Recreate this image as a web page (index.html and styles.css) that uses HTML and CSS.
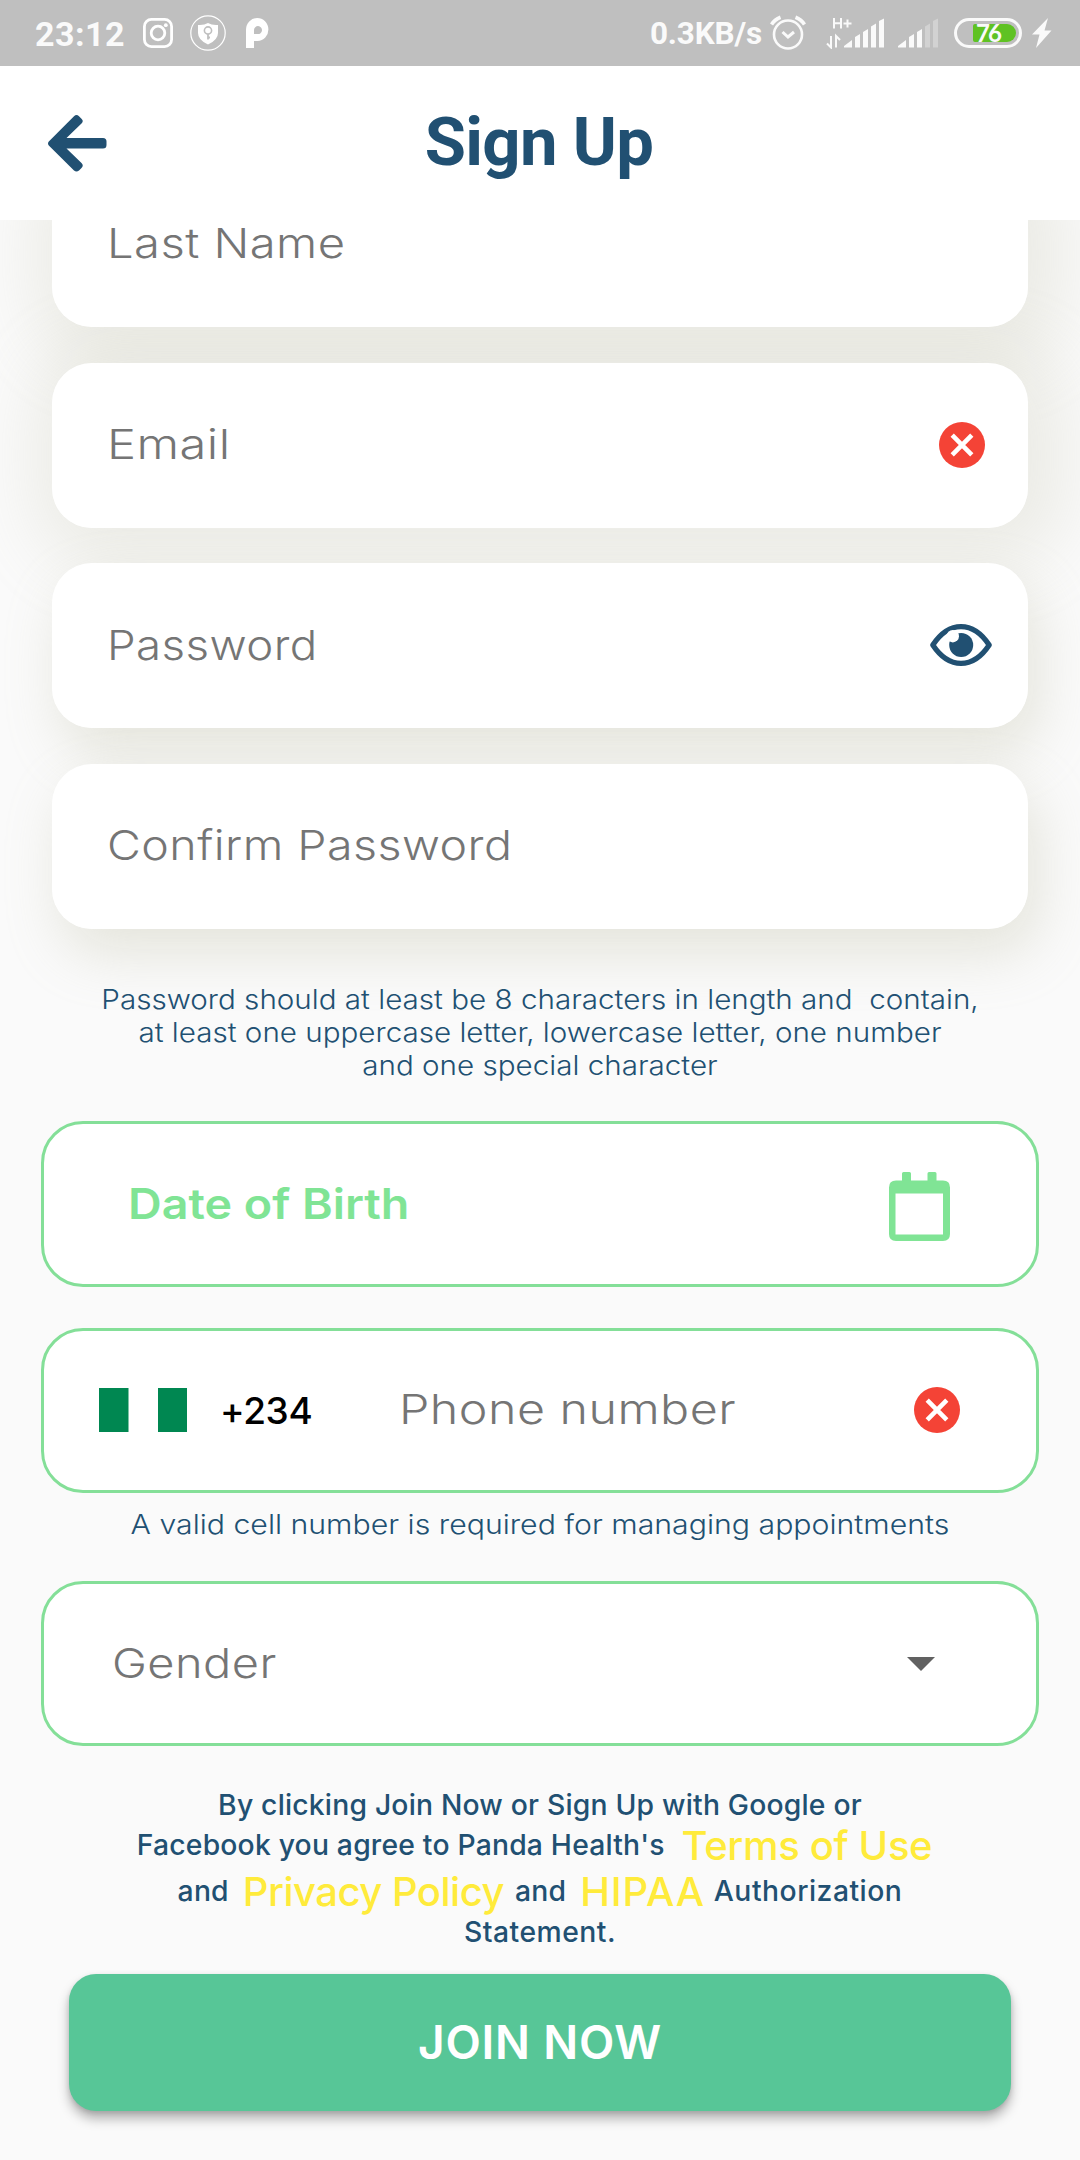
FILE: index.html
```html
<!DOCTYPE html>
<html lang="en">
<head>
<meta charset="utf-8">
<title>Sign Up</title>
<link rel="stylesheet" href="styles.css">
</head>
<body>
<div class="status">
  <span class="status__time">23:12</span>
  <svg class="status__insta" width="30" height="30" viewBox="0 0 30 30" fill="none" stroke="#fff" stroke-width="2.8"><rect x="1.4" y="1.4" width="27.2" height="27.2" rx="7"/><circle cx="15" cy="15" r="6.8"/><circle cx="22.8" cy="7.2" r="1.9" fill="#fff" stroke="none"/></svg>
  <svg class="status__shield" width="36" height="36" viewBox="0 0 36 36"><circle cx="18" cy="18" r="17.2" fill="none" stroke="#fff" stroke-width="1.2"/><path d="M8 10Q14 10.500 18 8Q22 10.500 28 10V18Q28 25 18 29.500Q8 25 8 18Z" fill="#fff"/><circle cx="18" cy="15.500" r="3.600" fill="none" stroke="#bfbfbf" stroke-width="1.600"/><path d="M18 19V24.500M18 22.500H20" stroke="#bfbfbf" stroke-width="1.800"/></svg>
  <svg class="status__p" width="23" height="30" viewBox="0 0 23 30"><path fill="#fff" fill-rule="evenodd" d="M0 30V11.500A11.200 11.500 0 1 1 11.500 23H8V30ZM8 16H11.500A4 4 0 1 0 8 12Z"/></svg>
  <span class="status__rate">0.3KB/s</span>
  <svg class="status__alarm" width="36" height="36" viewBox="0 0 36 36" fill="none" stroke="#fafafa" stroke-width="2.600"><circle cx="18" cy="19.500" r="14"/><path d="M12.500 17L18 22L24 17" stroke-width="3"/><path d="M1.500 9.500Q4.500 4.500 10.500 2.200M25.500 2.200Q31.500 4.500 34.500 9.500" stroke-width="3.600"/></svg>
  <svg class="status__signal" width="58" height="32" viewBox="0 0 58 32"><g fill="none" stroke="#fafafa" stroke-width="2"><path d="M8 1V11.500M15 1V11.500M8 6.300H15M17.500 6.500H25.500M21.500 2.500V10.500"/><path d="M5 19V30.500L1 26.500M10 30.500V19L14 23"/></g><path fill="#fafafa" d="M18 30.500V29L26 23V30.500ZM29 30.500V20L34 17V30.500ZM37 30.500V15L42 12V30.500ZM45 30.500V9.500L50 6.500V30.500ZM53 30.500V4L58 1.500V30.500Z"/></svg>
  <svg class="status__signal2" width="40" height="32" viewBox="0 0 40 32"><path fill="#fafafa" d="M0 30.500V29L8 23V30.500ZM11 30.500V20L16 17V30.500ZM19 30.500V15L24 12V30.500Z"/><path fill="#d2d2d2" d="M27 30.500V9.500L32 6.500V30.500ZM35 30.500V4L40 1.500V30.500Z"/></svg>
  <span class="battery"><span class="battery__level">76</span></span>
  <svg class="status__bolt" width="20" height="30" viewBox="0 0 20 30"><path fill="#fafafa" d="M16 0L0 16.500H7.500L4 30L19.500 12.500H12.500Z"/></svg>
</div>

<header class="header">
  <svg class="header__back" width="59" height="57" viewBox="0 0 59 57"><path fill="#215072" d="M0.800 26.500L26 1.200Q28.500 -1 31 1.200L33.500 3.700Q36 6 33.500 8.500L18.500 23H55Q58.500 23 58.500 26.500V30Q58.500 33.500 55 33.500H18.500L33.500 48Q36 50.500 33.500 53L31 55.500Q28.500 57.700 26 55.500L0.800 30.500Q-0.800 28.500 0.800 26.500Z"/></svg>
  <h1 class="header__title">Sign Up</h1>
</header>

<main class="form">
  <div class="card card--first"><span class="label label--last">Last Name</span></div>
  <div class="card"><span class="label label--email">Email</span>
    <svg class="card__error" width="46" height="46" viewBox="0 0 46 46"><circle cx="23" cy="23" r="23" fill="#f44336"/><path d="M13.200 13.200L32.800 32.800M32.800 13.200L13.200 32.800" stroke="#fff" stroke-width="4.600"/></svg>
  </div>
  <div class="card card--soft"><span class="label label--pass">Password</span>
    <svg class="card__eye" width="62" height="42" viewBox="0 0 62 42"><path d="M2.800 21Q15 2.600 31 2.600T59.200 21Q47 39.400 31 39.400T2.800 21Z" fill="none" stroke="#215072" stroke-width="5.200" stroke-linejoin="round"/><circle cx="31.200" cy="21" r="12" fill="#215072"/><circle cx="22.800" cy="12.200" r="6.200" fill="#fff"/></svg>
  </div>
  <div class="card card--soft"><span class="label label--confirm">Confirm Password</span></div>

  <p class="hint">
    <span class="hint__line">Password should at least be 8 characters in length and&nbsp; contain,</span>
    <span class="hint__line">at least one uppercase letter, lowercase letter, one number</span>
    <span class="hint__line">and one special character</span>
  </p>

  <div class="box box--date"><span class="date">Date of Birth</span>
    <svg class="box__calendar" width="61" height="70" viewBox="0 0 61 70"><path fill="#80e495" fill-rule="evenodd" d="M13 1.500Q13 0 14.500 0H20.500Q22 0 22 1.500V8.500H38.500V1.500Q38.500 0 40 0H46Q47.500 0 47.500 1.500V8.500H54Q61 8.500 61 15.500V62Q61 69 54 69H7Q0 69 0 62V15.500Q0 8.500 7 8.500H13ZM6.500 21.500V62.500H54V21.500Z"/></svg>
  </div>

  <div class="box box--phone">
    <svg width="88" height="44" viewBox="0 0 88 44"><path fill="#fff" d="M0 0H88V44H0Z"/><path fill="#008751" d="M0 0H29.500V44H0ZM59 0H88V44H59Z"/></svg>
    <span class="code">+234</span>
    <span class="label label--phone">Phone number</span>
    <svg class="box__error" width="46" height="46" viewBox="0 0 46 46"><circle cx="23" cy="23" r="23" fill="#f44336"/><path d="M13.200 13.200L32.800 32.800M32.800 13.200L13.200 32.800" stroke="#fff" stroke-width="4.600"/></svg>
  </div>

  <p class="hint hint--cell"><span class="hint__line hint__line--cell">A valid cell number is required for managing appointments</span></p>

  <div class="box box--gender"><span class="label label--gender">Gender</span>
    <svg class="box__caret" width="28" height="14" viewBox="0 0 28 14"><path fill="#616161" d="M0 0H28L14 14Z"/></svg>
  </div>

  <div class="terms">
    <div class="terms__line">By clicking Join Now or Sign Up with Google or</div>
    <div class="terms__line terms__line--use"><span>Facebook you agree to Panda Health's</span><a class="link link--use">Terms of Use</a></div>
    <div class="terms__line terms__line--privacy"><span>and</span><a class="link link--privacy">Privacy Policy</a><span>and</span><a class="link link--hipaa">HIPAA</a><span class="terms__wide">Authorization</span></div>
    <div class="terms__line terms__line--last terms__wide">Statement.</div>
  </div>

  <button class="join">JOIN NOW</button>
</main>
</body>
</html>
```
FILE: styles.css
```css
* { box-sizing: border-box; }
body {
  margin: 0;
  width: 1080px;
  height: 2160px;
  overflow: hidden;
  background: #fafafa;
  font-family: Inter, "Open Sans", sans-serif;
}
svg { display: block; flex: none; }

/* Status bar */
.status {
  display: flex;
  align-items: flex-start;
  height: 66px;
  background: #bfbfbf;
  color: #fafafa;
  font-family: Roboto, sans-serif;
  font-weight: 700;
  white-space: nowrap;
}
.status__time { width: 108px; margin-left: 35px; font-size: 34px; line-height: 68px; letter-spacing: 0.5px; }
.status__insta { margin-top: 18px; }
.status__shield { margin: 15px 0 0 17px; }
.status__p { margin: 18px 0 0 20px; }
.status__rate { width: 121px; margin-left: 381px; font-size: 31.5px; line-height: 68px; font-weight: 700; letter-spacing: -0.2px; }
.status__alarm { margin: 15px 0 0 -1px; }
.status__signal { margin: 17px 0 0 20px; }
.status__signal2 { margin: 17px 0 0 14px; }
.battery {
  width: 68px;
  height: 30px;
  margin: 18px 0 0 16px;
  padding: 3px 3px 3px 16px;
  border: 3px solid #fafafa;
  border-radius: 15px;
}
.battery__level {
  display: block;
  height: 18px;
  padding-left: 3px;
  border-radius: 2px 9px 9px 2px;
  background: #5fc223;
  font-family: Lato, sans-serif;
  font-size: 24px;
  font-weight: 700;
  line-height: 18px;
  letter-spacing: -2px;
}
.status__bolt { margin: 18px 0 0 10px; }

/* Header */
.header { display: flex; align-items: center; height: 154px; background: #fff; }
.header__back { margin-left: 48px; }
.header__title {
  width: 320px;
  margin: -2px 0 0 272px;
  color: #215072;
  font-family: Roboto, sans-serif;
  font-size: 67px;
  font-weight: 700;
  line-height: 80px;
  letter-spacing: -0.7px;
  text-align: center;
  white-space: nowrap;
}

/* Form */
.form { display: flex; flex-direction: column; height: 1940px; overflow: hidden; isolation: isolate; }
.card {
  position: relative;
  display: flex;
  flex: none;
  align-items: center;
  justify-content: space-between;
  height: 165px;
  margin: 0 52px 35.7px;
  padding: 0 43px 2px 55px;
  border-radius: 40px;
  background: #fff;
}
/* Shadows sit on a layer under every card so they never tint a neighbour */
.card::before {
  content: "";
  position: absolute;
  inset: 0;
  z-index: -1;
  border-radius: inherit;
  box-shadow: 10px 10px 70px 26px rgba(180, 180, 150, 0.2);
}
.card--soft::before { box-shadow: 10px 24px 55px rgba(180, 180, 150, 0.3); }
.card--first { margin-top: -58.2px; }
.card__error { margin-top: 2px; }
.card__eye { margin-right: -7px; }

/* Wide letterforms: each label is stretched from its left edge */
.label {
  color: #757575;
  font-size: 41px;
  font-weight: 300;
  letter-spacing: 0.4px;
  line-height: 52px;
  white-space: nowrap;
  transform-origin: left center;
}
.label--last { transform: scaleX(1.15); }
.label--email { transform: scaleX(1.19); }
.label--pass { transform: scaleX(1.112); }
.label--confirm { transform: scaleX(1.135); }
.label--phone { margin: -2px 0 0 -2px; transform: scaleX(1.18); }
.label--gender { margin-top: -1px; transform: scaleX(1.145); }

.hint { flex: none; height: 99px; margin: 18px 0 0; color: #215072; font-size: 27px; font-weight: 300; line-height: 33px; text-align: center; }
.hint__line { display: block; white-space: pre; transform: scaleX(1.096); }
.hint--cell { height: 33px; margin: 15px 0 0; }
.hint__line--cell { transform: scaleX(1.12); }

.box {
  display: flex;
  flex: none;
  align-items: center;
  height: 165px;
  margin: 0 41px;
  border: 3px solid #84df98;
  border-radius: 42px;
  background: #fff;
}
.box--date { justify-content: space-between; height: 166px; margin-top: 39px; padding: 0 86px 0 84px; }
.date { color: #80e495; font-size: 42px; font-weight: 600; line-height: 52px; white-space: nowrap; transform: scaleX(1.11); transform-origin: left center; }
.box__calendar { margin-top: 7px; }
.box--phone { margin-top: 41px; padding-left: 55px; }
.code { width: 181px; margin-left: 33px; color: #000; font-size: 37px; font-weight: 500; letter-spacing: -0.4px; white-space: nowrap; }
.box__error { margin-left: auto; margin-right: 76px; }
.box--gender { justify-content: space-between; margin-top: 40px; padding: 0 101px 0 68px; }
.box__caret { margin-top: 2px; }

/* Terms */
.terms { flex: none; height: 176px; margin-top: 40px; color: #215072; font-size: 28.3px; font-weight: 500; letter-spacing: 0.2px; }
.terms__line { display: flex; align-items: baseline; justify-content: center; height: 39px; line-height: 39px; white-space: nowrap; }
.terms__line--use { margin: -4px 0 0 -11px; }
.terms__line--privacy { margin-top: 7px; }
.terms__line--last { margin-top: 7px; }
.terms__wide { letter-spacing: 0.5px; }
.link { position: relative; top: 5px; color: #ffeb3b; font-size: 40px; }
.link--use { margin-left: 17px; letter-spacing: -0.35px; }
.link--privacy { margin: 0 11px 0 14px; letter-spacing: -0.5px; }
.link--hipaa { margin: 0 9px 0 14px; letter-spacing: 0.8px; }

.join {
  height: 137px;
  flex: none;
  margin: 12px 69px 0;
  padding: 0 0 1px;
  border: 0;
  border-radius: 27px;
  background: #57c697;
  box-shadow: 0 8px 12px rgba(0, 0, 0, 0.28), 0 2px 5px rgba(0, 0, 0, 0.12);
  color: #fff;
  font-family: Inter, sans-serif;
  font-size: 46px;
  font-weight: 600;
  letter-spacing: 0.8px;
}
```
